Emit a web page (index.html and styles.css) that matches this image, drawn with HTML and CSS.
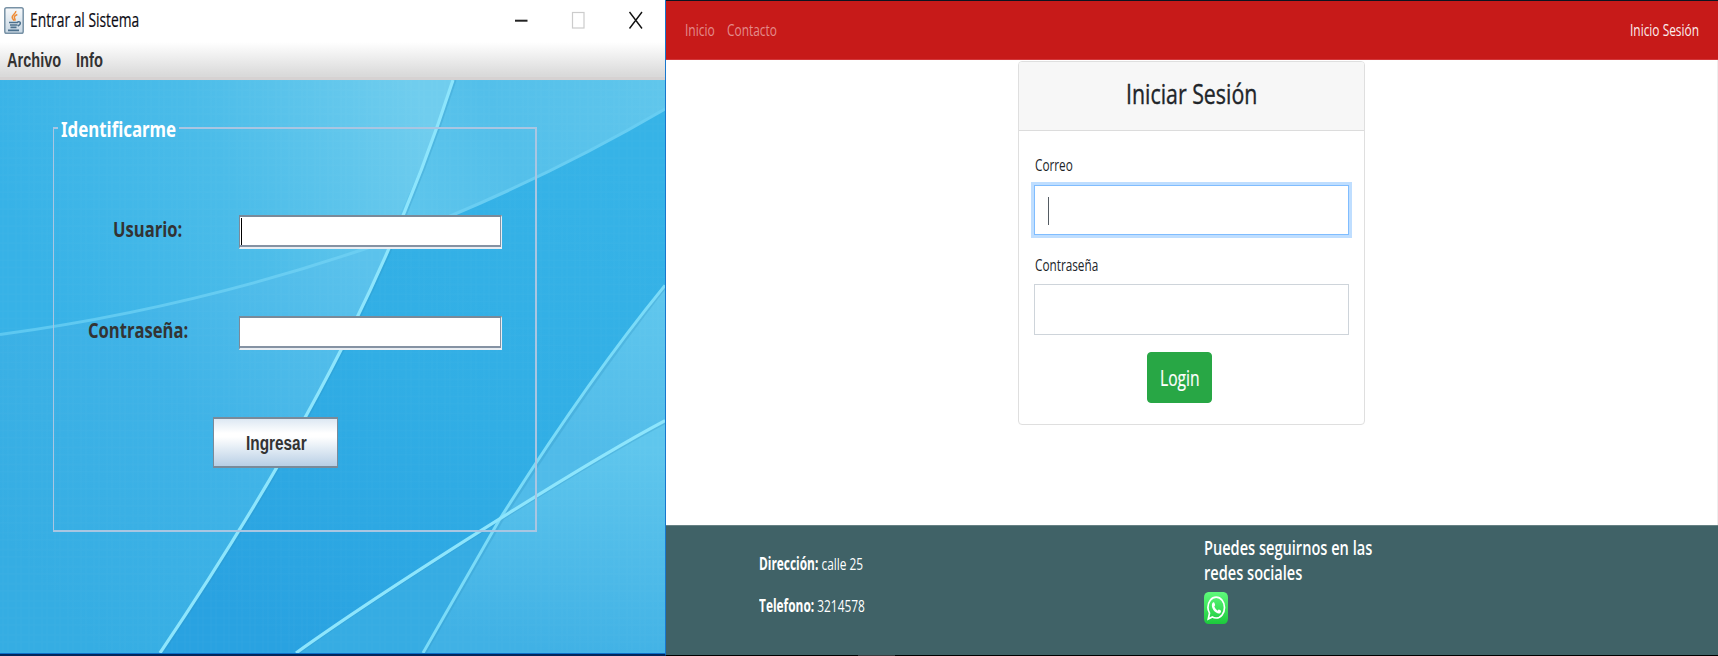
FILE: index.html
```html
<!DOCTYPE html>
<html lang="es">
<head>
<meta charset="utf-8">
<title>Entrar al Sistema</title>
<link rel="stylesheet" href="styles.css">
</head>
<body>
<main class="screen">
  <section class="window">
    <header class="titlebar">
      <svg class="java" viewBox="0 0 20 27" preserveAspectRatio="none">
        <defs><linearGradient id="jv" x1="0" y1="0" x2="0" y2="1"><stop offset="0" stop-color="#f6f8fa"/><stop offset="1" stop-color="#c9d8e4"/></linearGradient></defs>
        <rect x=".8" y=".8" width="18.4" height="25.4" rx="1.8" fill="url(#jv)" stroke="#7892a6" stroke-width="1.5"/>
        <path d="M11.800 4c.6 2.600-4.300 4-3.600 6.600.3 1.300 1.300 2 1.800 3M13.300 7.500c-2.600 1-3.700 2.400-2.600 3.900.7 1 .5 1.600-.1 2.400" fill="none" stroke="#ee8a34" stroke-width="1.500"/>
        <path d="M5 15.500h9M6 18h7.500M6.500 20.400h6M4 23.300h11" stroke="#4d718d" stroke-width="1.700" fill="none"/>
        <path d="M13.500 15c3.300-1.200 4.200 2 .2 4" fill="none" stroke="#4d718d" stroke-width="1.500"/>
      </svg>
      <h1 class="t window-title">Entrar al Sistema</h1>
      <svg class="controls" viewBox="0 0 130 20">
        <path d="M1 10.700h12.500" stroke="#222" stroke-width="2"/>
        <rect x="58.500" y="2.500" width="11.500" height="15.500" fill="none" stroke="#ccc" stroke-width="1.200"/>
        <path d="M115.500 2l12.500 16.500M128 2l-12.500 16.500" stroke="#111" stroke-width="1.400"/>
      </svg>
    </header>
    <nav class="menubar"><span class="t menu-archivo">Archivo</span><span class="t menu-info">Info</span></nav>
    <div class="canvas">
      <svg class="wallpaper" viewBox="0 80 665 572" preserveAspectRatio="none">
        <defs>
          <linearGradient id="left" gradientUnits="userSpaceOnUse" x1="30" y1="260" x2="420" y2="100"><stop offset="0" stop-color="#37b2e7"/><stop offset=".5" stop-color="#4bbce9"/><stop offset="1" stop-color="#70cdee"/></linearGradient>
          <linearGradient id="low" gradientUnits="userSpaceOnUse" x1="20" y1="560" x2="370" y2="270"><stop offset="0" stop-color="#35ade3"/><stop offset=".5" stop-color="#3fb3e7"/><stop offset="1" stop-color="#5bc2ec"/></linearGradient>
          <linearGradient id="mid" gradientUnits="userSpaceOnUse" x1="600" y1="150" x2="300" y2="652"><stop offset="0" stop-color="#36b3e7"/><stop offset=".5" stop-color="#31aee5"/><stop offset="1" stop-color="#29a2e1"/></linearGradient>
          <linearGradient id="top" gradientUnits="userSpaceOnUse" x1="400" y1="180" x2="660" y2="80"><stop offset="0" stop-color="#5dc5ec"/><stop offset=".4" stop-color="#53bfea"/><stop offset="1" stop-color="#60c6ec"/></linearGradient>
          <linearGradient id="right" gradientUnits="userSpaceOnUse" x1="600" y1="440" x2="560" y2="652"><stop offset="0" stop-color="#5fc6ed"/><stop offset="1" stop-color="#40b1e5"/></linearGradient>
          <linearGradient id="right2" gradientUnits="userSpaceOnUse" x1="660" y1="300" x2="600" y2="460"><stop offset="0" stop-color="#5fc6ed"/><stop offset="1" stop-color="#50bbe9"/></linearGradient>
          <linearGradient id="curve" x1="0" x2="1" y1="0" y2="0"><stop offset="0" stop-color="#5cc8f1"/><stop offset=".5" stop-color="#6bcef2"/><stop offset="1" stop-color="#67cdf2"/></linearGradient>
          <pattern id="weave" width="13" height="17" patternUnits="userSpaceOnUse"><path d="M3 0v17M8 0v17M0 5h13M0 12h13" stroke="#fff" stroke-opacity=".02"/></pattern>
        </defs>
        <rect y="80" width="665" height="572" fill="url(#mid)"/>
        <path d="M0 80H453C405 228 330 400 160 652H0Z" fill="url(#low)"/>
        <path d="M0 80H453Q426 163 388 242Q195 308 0 334Z" fill="url(#left)"/>
        <path d="M453 80H665V109Q535 185 387 241Q428 158 453 80Z" fill="url(#top)"/>
        <path d="M665 420L500 518L296 652H425Z" fill="#36ace3"/>
        <path d="M665 285C620 340 565 415 500 518L425 652H665Z" fill="url(#right)"/>
        <path d="M665 285C620 340 565 415 500 518Q582 463 665 420Z" fill="url(#right2)"/>
        <rect y="80" width="665" height="572" fill="url(#weave)"/>
        <g fill="none">
          <path d="M665 109Q535 185 387 241Q195 308 0 334" stroke="url(#curve)" stroke-width="3"/>
          <path d="M455 80C407 228 332 400 162 652M665 287C622 342 567 417 502 519L425 652M665 422C580 467 380 592 298 652" stroke="#2b8fc0" stroke-opacity=".25" stroke-width="3"/>
          <path d="M665 285C620 340 565 415 500 518Q470 570 423 652" stroke="#7adbf8" stroke-width="3"/>
          <path d="M453 80C405 228 330 400 160 652M665 420C580 465 380 592 296 652" stroke="#8de5fc" stroke-width="3.200"/>
        </g>
      </svg>
      <fieldset class="group">
        <legend><span class="t legend-text">Identificarme</span></legend>
        <div class="row"><label class="t lb-user">Usuario:</label><span class="field focus"></span></div>
        <div class="row row2"><label class="t lb-pass">Contraseña:</label><span class="field"></span></div>
        <button class="enter"><span class="t enter-text">Ingresar</span></button>
      </fieldset>
    </div>
  </section>
  <section class="site">
    <nav class="navbar">
      <a class="t n-inicio">Inicio</a><a class="t n-contacto">Contacto</a><a class="t n-sesion">Inicio Sesión</a>
    </nav>
    <div class="page">
      <form class="card">
        <div class="card-header"><h2 class="t heading">Iniciar Sesión</h2></div>
        <label class="t c-correo">Correo</label>
        <div class="input active"><i class="caret"></i></div>
        <label class="t c-pass">Contraseña</label>
        <div class="input"></div>
        <button type="button" class="login"><span class="t login-text">Login</span></button>
      </form>
    </div>
    <footer class="footer">
      <div class="contact">
        <p class="t"><b>Dirección:</b> calle 25</p>
        <p class="t"><b>Telefono:</b> 3214578</p>
      </div>
      <div class="social">
        <p class="t">Puedes seguirnos en las<br>redes sociales</p>
        <svg class="wa" viewBox="0 0 24 32" preserveAspectRatio="none">
          <defs><linearGradient id="wag" x1="0" y1="0" x2="0" y2="1"><stop offset="0" stop-color="#5ffa7b"/><stop offset="1" stop-color="#1cc93c"/></linearGradient></defs>
          <rect width="24" height="32" rx="4.500" ry="5.500" fill="url(#wag)"/>
          <path d="M4.300 27l1.200-5.800C4.400 19.200 3.900 17.600 3.900 15.600 3.900 9.700 7.500 5.200 12.200 5.200s8.300 4.600 8.300 10.400S16.800 26 12.200 26c-1.400 0-2.700-.3-3.900-1.100Z" fill="none" stroke="#fff" stroke-width="1.700"/>
          <path d="M8.900 10.600c.5-.6 1.200-.5 1.500.2l.7 2c.2.500-.3 1.200-.8 1.800.8 1.900 1.900 3.200 3.300 4.100.6-.9 1-1.500 1.500-1.200l1.700 1.100c.5.400.2 1.600-.4 2.300-1 1-2.600.9-4.300-.3-2-1.400-3.300-3.300-4-5.400-.6-1.900-.1-3.700.8-4.600Z" fill="#fff"/>
        </svg>
      </div>
    </footer>
    <div class="scroll"><i></i></div>
  </section>
</main>
</body>
</html>
```
FILE: styles.css
```css
* { box-sizing: border-box; margin: 0; padding: 0; }
body { width: 1718px; height: 656px; overflow: hidden; background: #fff; font-family: "Open Sans", sans-serif; }
.screen { display: flex; height: 656px; }

/* condensed lettering: each label sets its own horizontal squeeze */
.t { display: block; white-space: nowrap; transform-origin: 0 50%; flex: none; }

.window { width: 666px; height: 656px; display: flex; flex-direction: column; border-right: 1px solid #1877cd; border-bottom: 2px solid #03265a; flex: none; }
.titlebar { height: 39px; display: flex; align-items: center; padding-left: 4px; }
.java { width: 20px; height: 27px; margin-top: 2px; }
.window-title { font-size: 19.5px; font-weight: 400; line-height: 39px; width: 478px; margin-left: 6px; transform: scaleX(.709); color: #0c0c14; -webkit-text-stroke: .2px #0c0c14; }
.controls { width: 130px; height: 20px; margin-left: 6px; }
.menubar { height: 41px; display: flex; background: linear-gradient(#fff 8%, #dadada 95%); border-bottom: 3px solid #d6d2d2; padding-left: 7px; font: bold 20px/43px "Liberation Sans", sans-serif; color: #333; }
.menu-archivo { width: 69px; transform: scaleX(.727); }
.menu-info { transform: scaleX(.734); }
.canvas { position: relative; flex: 1; border-bottom: 1px solid #0b6fc9; padding: 34px 0 0 53px; }
.wallpaper { position: absolute; left: 0; top: 0; width: 665px; height: 573px; }

.group { position: relative; width: 484px; height: 418px; border: 2px solid #a9c6e2; border-left-width: 1px; padding: 0 0 0 34px; }
.group legend { height: 28px; width: 121px; margin-left: -30px; padding-left: 3px; }
.legend-text { font: bold 22px/29px "Noto Sans", sans-serif; color: #fff; transform: scaleX(.767); }
.row { display: flex; margin-top: 73px; height: 34px; }
.row2 { margin-top: 67px; }
.row label { font-size: 21px; font-weight: 700; line-height: 28px; color: #333; width: 151px; transform: scaleX(.79); }
.row .lb-user { margin-left: 25px; width: 126px; }
.field { width: 263px; height: 34px; background: #fff; border: 2px solid #7a8a99; border-color: #7a8a99 #e9edf2 #e9edf2 #7a8a99; border-left-width: 1px; border-right-width: 1px; box-shadow: inset -1px -2px 0 #8592a3; }
.focus::before { content: ""; display: block; width: 1px; height: 27px; margin: 1px 0 0 1px; background: #000; }
.enter { display: block; width: 125px; height: 51px; margin: 67px 0 0 125px; border: 2px solid #7a8a99; border-left-width: 1px; border-right-width: 1px; background: linear-gradient(#dde8f3, #fff 30%, #fff 38%, #b8cfe5); }
.enter-text { font: bold 20px/46px "Liberation Sans", sans-serif; color: #333; margin-left: 32px; width: 60px; transform: scaleX(.768); }

.site { width: 1052px; display: flex; flex-direction: column; border-top: 1px solid #0c1420; }
.navbar { height: 59px; background: #c71a19; border-bottom: 1px solid #d2373a; display: flex; padding-left: 19px; font-size: 17px; line-height: 58px; color: #e38c8c; }
.n-inicio { width: 42px; transform: scaleX(.709); }
.n-contacto { width: 903px; transform: scaleX(.699); }
.n-sesion { transform: scaleX(.701); color: #fbeeee; width: 60px; }
.page { height: 465px; border-right: 1px solid #eee; padding: 1px 0 0 352px; }
.card { width: 347px; height: 364px; border: 1px solid #dfdfdf; border-radius: 4px; padding: 0 15px; }
.card-header { height: 69px; margin: 0 -15px; background: #f7f7f7; border-bottom: 1px solid #dcdcdc; border-radius: 3px 3px 0 0; padding-left: 107px; }
.heading { font-size: 28px; font-weight: 500; line-height: 62px; color: #212529; transform: scaleX(.762); -webkit-text-stroke: .4px #212529; }
.card label { font-size: 17px; line-height: 24px; color: #212529; transform: scaleX(.692); width: 60px; margin-left: 1px; }
.c-correo { margin-top: 22px; }
.card .c-pass { margin-top: 18px; }
.input { width: 315px; height: 51px; border: 1px solid #ced4da; margin-top: 7px; }
.active { margin-top: 8px; height: 50px; border-color: #80bdff; box-shadow: 0 0 0 3px #bfdeff; padding: 11px 0 0 13px; }
.caret { display: block; width: 1px; height: 28px; background: #555c63; }
.login { display: block; width: 65px; height: 51px; margin: 17px 0 0 113px; border: 1px solid #28a745; border-radius: 4px; background: #28a745; }
.login-text { font: 21px/50px "Open Sans", sans-serif; color: #fff; margin-left: 12px; width: 38px; transform: scaleX(.745); -webkit-text-stroke: .2px #fff; }
.footer { height: 130px; background: #406267; border-top: 1px solid #668184; display: flex; color: #fff; padding-left: 93px; }
.contact { width: 445px; padding-top: 26px; font-size: 17px; line-height: 24px; }
.contact .t { width: 120px; margin-bottom: 18px; transform: scaleX(.7); }
.social { padding-top: 9px; font-size: 20.5px; font-weight: 600; line-height: 25px; }
.social .t { width: 240px; transform: scaleX(.711); }
.wa { display: block; width: 24px; height: 32px; margin-top: 7px; }
.scroll { flex: 1; background: #000; }
.scroll i { display: block; width: 37px; height: 1px; margin-left: 192px; background: #3a3a3d; }
```
